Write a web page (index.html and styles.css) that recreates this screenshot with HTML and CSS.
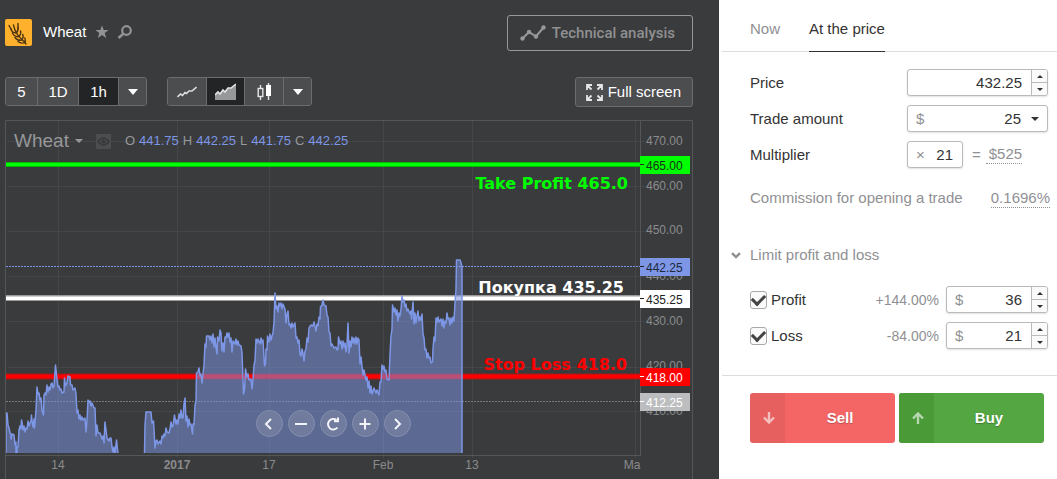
FILE: index.html
```html
<!DOCTYPE html>
<html lang="en">
<head>
<meta charset="utf-8">
<title>Wheat</title>
<meta name="viewport" content="width=device-width, initial-scale=1">
<link rel="stylesheet" href="styles.css">
</head>
<body>
<div class="app">
  <main class="market">
    <header class="market-head">
      <svg class="logo" viewBox="0 0 27 27" width="27" height="27" aria-hidden="true">
        <rect width="27" height="27" rx="2" fill="#ffb02c"/>
        <g fill="none" stroke="#4a3310" stroke-width="1.400" stroke-linecap="round">
          <path d="M8.500 6Q10 15 19.500 23L21 25M4 6.500 6.500 11M13 4.500V9"/>
          <path d="M6 10Q6.500 13.500 11 14Q13.500 12 13 8.500M7.500 14Q9 17.500 13.300 17.800Q16.500 15.500 15.500 12M10 18.500Q12 21.500 16 21.300Q19 19 17.800 15.500M13 22.500Q16 25 19.500 23.700Q21 21.500 19.800 19"/>
        </g>
      </svg>
      <h1 class="asset">Wheat</h1>
      <button class="icon-btn" aria-label="Add to favourites">
        <svg viewBox="0 0 14 14" width="14" height="14"><path d="M7 .3 8.700 5H13.600L9.700 8 11.200 12.900 7 10 2.800 12.900 4.300 8 .4 5H5.300Z" fill="#929394"/></svg>
      </button>
      <button class="icon-btn" aria-label="Search">
        <svg viewBox="0 0 16 16" width="16" height="16" fill="none" stroke="#929394"><circle cx="9.500" cy="6.500" r="4.300" stroke-width="2.200"/><path d="M6.300 9.700 1.500 14" stroke-width="2.600"/></svg>
      </button>
      <button class="analysis">
        <svg viewBox="0 0 26 16" width="26" height="16"><path d="M2.500 13.500 9 7l7 4.500L23.500 2.500" fill="none" stroke="#97989a" stroke-width="2"/><g fill="#97989a"><circle cx="2.500" cy="13.500" r="2.200"/><circle cx="9" cy="7" r="2.200"/><circle cx="16" cy="11.500" r="2.200"/><circle cx="23.500" cy="2.500" r="2.200"/></g></svg>
        Technical analysis
      </button>
    </header>

    <div class="toolbar">
      <div class="group">
        <button class="seg w31">5</button>
        <button class="seg w41">1D</button>
        <button class="seg w40 active">1h</button>
        <button class="seg w28" aria-label="More intervals"><svg viewBox="0 0 10 6" width="10" height="6"><path d="M0 0H10L5 6Z" fill="#fff"/></svg></button>
      </div>
      <div class="group">
        <button class="seg w38" aria-label="Line"><svg viewBox="0 0 20 12" width="20" height="12"><path d="M.5 11 3.500 8 5.500 9.500 8 6.500 9.500 7.500 12 5H15L19.500 1" fill="none" stroke="#dcdcdd" stroke-width="1.600"/></svg></button>
        <button class="seg w38 active" aria-label="Area"><svg viewBox="0 0 21 17" width="21" height="17"><path d="M0 12 3 9 5 11 8 7 10 9 13 5H16L21 1V17H0Z" fill="#97989a"/><path d="M0 12 3 9 5 11 8 7 10 9 13 5H16L21 1" fill="none" stroke="#e4e4e5" stroke-width="1.600"/></svg></button>
        <button class="seg w39" aria-label="Candles"><svg viewBox="0 0 15 18" width="15" height="18"><path d="M3.500 2V5M3.500 13V17M11.500 0V17" stroke="#e6e6e7" stroke-width="1.400"/><rect x="1.200" y="5.500" width="4.600" height="8" fill="none" stroke="#e6e6e7" stroke-width="1.400"/><rect x="9" y="2" width="5" height="11" fill="#fff"/></svg></button>
        <button class="seg w28" aria-label="More chart types"><svg viewBox="0 0 10 6" width="10" height="6"><path d="M0 0H10L5 6Z" fill="#fff"/></svg></button>
      </div>
      <button class="fullscreen">
        <svg viewBox="0 0 17 17" width="17" height="17" fill="none" stroke="#e6e6e7" stroke-width="1.800"><path d="M1 6V1H6M11 1H16V6M16 11V16H11M6 16H1V11M1 1 5.500 5.500M16 1 11.500 5.500M16 16 11.500 11.500M1 16 5.500 11.500"/></svg>
        Full screen
      </button>
    </div>

    <section class="chart" aria-label="Price chart">
      <svg class="plot" viewBox="5 120 688 359">
        <clipPath id="plot-area"><rect x="6" y="121" width="634" height="332"/></clipPath>
        <path d="M5.500 479V120.500H692.500V479" fill="none" stroke="#555658"/>
        <path class="grid" d="M58.500 121V458M177.500 121V458M269.500 121V458M383.500 121V458M472.500 121V458M635.500 121V458M7 141.500H645M7 186.500H645M7 231.500H645M7 276.500H645M7 321.500H645M7 367.500H645M7 411.500H645"/>
        <path d="M5 455.500H640.500M640.500 121V456" fill="none" stroke="#555658"/>
        <path d="M6 162V167H640V162Z" fill="#00b800"/><path d="M6 163H640V166H6Z" fill="#0f0"/>
        <path d="M6 295H640V301H6Z" fill="#9a9a9b"/><path d="M6 296.500H640V300H6Z" fill="#fff"/>
        <path d="M6 373.500H640V379.500H6Z" fill="#a01c1d"/><path d="M6 374.500H640V378.500H6Z" fill="#f00"/>
        <path d="M6 266.500H640" stroke="#7d97e6" stroke-dasharray="2 1"/>
        <path d="M6 401.500H640" stroke="#77787a" stroke-dasharray="2 1"/>
        <g class="area" clip-path="url(#plot-area)">
          <path d="M6 454V413L7 413 8 425 9 428 10 433 11 434 11 439 12 434 14 435 15 445 16 442 16 454H17L17 447 18 447 19 430 20 426 21 429 21.500 420 22 422 23 430 24 426 25 432 26 428 27 429 28 421 29 426 30 423 31 421 31.500 415 32 421 33 427 34 419 34.500 428 36 410 37 387 38 394 39 393 40 400 41 398 42 410 43.500 415 44 395 45 393 46 395 47 385 48 392 49 387 50 390 51 384 52 383 53 388 54 386 55.500 365 57 379 58 387 59 386 60 390 61 389 62 393 64 392 64.500 378 65.500 386 67 383 68 376 70 377 70.500 385 72 385 73 390 75 388 76 394 77 413 78 410 79 419 80 415 81 420 82 417 83 420 85 418 86 432 87 420 88 400 89 402 90 401 91 406 92 403 94 408 95 408 96 436 97 425 98 433 100 433 102 439 103 436 104 443 105 422 106 430 107 438 109 441 110 438 111 438 112 447 113 452 114 447 115 454 116.500 440 118 454Z"/>
          <path d="M144.500 454 145 425 146 412H151L152 423 153.500 421 155 448 156 441 157 440 158 444 160 441 161 444 162 436 163 438 164 434 165 436 166 428 167 432 169 433 170 429 171 422 172 427 173 426 174.500 415 176 424 177 420 178 424 179 414 180 418 181 410 182 418 183 418 184 404 185 398 186 421 187 416 188 427 189 419 190 425 191 424 192.500 434 193 424 194 425 195 405 196 401 196.500 373 198 372 199 368 200 376 201 374 202 383 203 374 204 365 205 344 206 347 206.500 336H209L210 340 211 336 212 343 213 334 214 347 215 338 216 348 217 354 217.500 337 219 341 220 330 221 333 222 351 223 343 224 352 225 337 226 338 227 333 228 337 229 333 230 342 231 338 232 352 233 341 235 344 236 339 237 345 238 341 239 345 241 346 242 353 243.500 394 244.500 390 245.500 369 247 377 248 374 249 380 251 379 252 389 253 379 254 365 255 361 256 339 257 343 258 339 260 344 261 338 262 343 263 340 264.500 366 265.500 364 266 349 267 350 267.500 336 269 342 270 334 271 340 272 336 273 333 274 322 275 293 276 309 277 306 278 312 279 303 280 306 281 303 282 309 283 304 285 309 286 323 287 314 288 311 289 325 290 324 291 328 292 323 293 327 295 323 296 338 297 337 298 343 299 340 300 354 301 356 302 349 303 353 304 361 305 351 306 349 307 338 308 342 309 328 311 325 313 326 314 322 316 331 317 324 318 326 319 317 320 319 320.500 307 322 305 323 300 324 305 326 306 327 315 328 317 329 332 330 333 331 346 332 344 334 348 336 347 337 350 338 349 338.500 337 340 344 341 341 342 349 343 341 344 347 345 343 346 352 347 345 348 323 349 353 350 341 351 347 352 337 353 343 354 338 355 344 356 337 357 344 358 338 359 340 360 364 361 357 363 375 364 370 366 380 367 377 368 388 369 381 370 393 371 386 372 394 374 388 376 393 377 390 379 395 380 382 381 382 382 365 383 369 384 366 385 372 386 370 387 379 389 380 390 355 391 336 392 329 392.500 305 394 312 395 308 396 315 397 310 398 321 399 313 400 316 401 309 402 296 403 302 404 300 405 307 406 304 407 311 408 309 410 314 411 311 411.500 319 413 302 414 324 415 313 416 323 417 316 418 311 419 321 420 317 421 320 422 314 423 334 424 338 425 350 426 349 427 358 428 353 429 358 430 357 431 363 432.500 362 433 349 434 337 435 341 436 318 437 322 438 317 439 322 441 319 442 326 443 319 444 328 445 321 446 323 447 313 448 319 449 318 450 325 451 318 452 323 453 317 454 321 455 303 456 289 456.500 260H460L461 263 462 267V454Z"/>
        </g>
        <g class="ticks">
          <text x="646" y="145">470.00</text><text x="646" y="190">460.00</text><text x="646" y="234">450.00</text><text x="646" y="280">440.00</text><text x="646" y="325">430.00</text><text x="646" y="370">420.00</text><text x="646" y="415">410.00</text>
        </g>
        <g class="ticks dates">
          <text x="58" y="469">14</text><text x="177" y="469" class="bold">2017</text><text x="269" y="469">17</text><text x="383" y="469">Feb</text><text x="472" y="469">13</text><text x="632" y="469">Ma</text>
        </g>
        <g class="tags">
          <rect x="640" y="156" width="50" height="18" fill="#0f0"/><path d="M640 164.500h4" stroke="#222"/><text x="646" y="170" fill="#18301a">465.00</text>
          <rect x="640" y="258" width="50" height="18" fill="#7d97e6"/><path d="M640 266.500h4" stroke="#222"/><text x="646" y="272" fill="#20283c">442.25</text>
          <rect x="640" y="290" width="50" height="18" fill="#fff"/><path d="M640 298.500h4" stroke="#222"/><text x="646" y="304" fill="#222">435.25</text>
          <rect x="640" y="368" width="50" height="18" fill="#f00"/><path d="M640 376.500h4" stroke="#fff"/><text x="646" y="382" fill="#fff">418.00</text>
          <rect x="640" y="393" width="50" height="18" fill="#bcbdbe"/><path d="M640 401.500h4" stroke="#fff"/><text x="646" y="407" fill="#fff">412.25</text>
        </g>
        <g class="notes">
          <text x="628" y="189" fill="#0f0">Take Profit 465.0</text>
          <text x="624" y="293" fill="#fff">Покупка 435.25</text>
          <text x="627" y="370" fill="#f00">Stop Loss 418.0</text>
        </g>
      </svg>
      <div class="legend">
        <button class="symbol">Wheat <svg viewBox="0 0 8 4" width="8" height="4"><path d="M0 0H8L4 4Z" fill="#97989a"/></svg></button>
        <button class="eye" aria-label="Show or hide"><svg viewBox="0 0 13 9" width="13" height="9"><path d="M1 4.500Q6.500-2.500 12 4.500Q6.500 11.500 1 4.500Z" fill="none" stroke="#38393b" stroke-width="1.500"/><circle cx="6.500" cy="4.500" r="2" fill="#38393b"/></svg></button>
        <dl class="ohlc">
          <dt>O</dt><dd>441.75</dd><dt>H</dt><dd>442.25</dd><dt>L</dt><dd>441.75</dd><dt>C</dt><dd>442.25</dd>
        </dl>
      </div>
      <nav class="controls" aria-label="Chart navigation">
        <button aria-label="Back"><svg viewBox="0 0 14 14"><path d="M9 2 4 7l5 5"/></svg></button>
        <button aria-label="Zoom out"><svg viewBox="0 0 14 14"><path d="M1 7H13"/></svg></button>
        <button aria-label="Reset"><svg viewBox="0 0 14 14"><path d="M10.500 3A5.300 5.300 0 1 0 11.500 10.500M8 4.200H12V.5"/></svg></button>
        <button aria-label="Zoom in"><svg viewBox="0 0 14 14"><path d="M1.500 7H12.500M7 1.500V12.500"/></svg></button>
        <button aria-label="Forward"><svg viewBox="0 0 14 14"><path d="M5 2 10 7l-5 5"/></svg></button>
      </nav>
    </section>
  </main>

  <aside class="order">
    <nav class="tabs">
      <button class="tab">Now</button>
      <button class="tab current">At the price</button>
    </nav>
    <form class="form">
      <div class="row">
        <label for="price">Price</label>
        <div class="field wide">
          <input id="price" type="text" value="432.25">
          <span class="spin"><button type="button" class="up" aria-label="Increase price"></button><button type="button" class="down" aria-label="Decrease price"></button></span>
        </div>
      </div>
      <div class="row">
        <label for="amount">Trade amount</label>
        <div class="field wide">
          <span class="unit">$</span>
          <select id="amount"><option>25</option></select>
          <svg class="caret" viewBox="0 0 8 4" width="8" height="4"><path d="M0 0H8L4 4Z" fill="#333"/></svg>
        </div>
      </div>
      <div class="row">
        <label for="multiplier">Multiplier</label>
        <div class="product">
          <div class="field small"><span class="unit">×</span><input id="multiplier" type="text" value="21"></div>
          <span>=</span><a class="hint" href="#">$525</a>
        </div>
      </div>
      <div class="row commission">
        <span>Commission for opening a trade</span>
        <a class="hint" href="#">0.1696%</a>
      </div>
      <button type="button" class="toggle"><svg viewBox="0 0 10 7" width="10" height="7"><path d="M1 1.200 5 5 9 1.200" fill="none" stroke="#8f9093" stroke-width="2.400"/></svg>Limit profit and loss</button>
      <div class="row limit">
        <label class="check"><input type="checkbox" checked>Profit</label>
        <span class="percent">+144.00%</span>
        <div class="field medium">
          <span class="unit">$</span><input type="text" value="36" aria-label="Profit amount">
          <span class="spin"><button type="button" class="up" aria-label="Increase profit"></button><button type="button" class="down" aria-label="Decrease profit"></button></span>
        </div>
      </div>
      <div class="row limit">
        <label class="check"><input type="checkbox" checked>Loss</label>
        <span class="percent">-84.00%</span>
        <div class="field medium">
          <span class="unit">$</span><input type="text" value="21" aria-label="Loss amount">
          <span class="spin"><button type="button" class="up" aria-label="Increase loss"></button><button type="button" class="down" aria-label="Decrease loss"></button></span>
        </div>
      </div>
    </form>
    <div class="actions">
      <button class="deal sell"><span class="arrow"><svg viewBox="0 0 12 12" width="12" height="12"><path d="M6 0V10M1 5.500 6 10.500 11 5.500"/></svg></span><span class="word">Sell</span></button>
      <button class="deal buy"><span class="arrow"><svg viewBox="0 0 12 12" width="12" height="12"><path d="M6 12V2M1 6.500 6 1.500 11 6.500"/></svg></span><span class="word">Buy</span></button>
    </div>
  </aside>
</div>
</body>
</html>
```
FILE: styles.css
```css
* { box-sizing: border-box; }
body { margin: 0; font: 15px/18px "Liberation Sans", Arial, sans-serif; color: #333; background: #fff; }
button, input, select { font: inherit; color: inherit; margin: 0; padding: 0; border: 0; background: none; }
button { cursor: pointer; }
svg { display: block; flex: none; }

.app { display: grid; grid-template-columns: minmax(0, 1fr) 338px; min-height: 100vh; }

.market { background: #3a3b3d; color: #fff; padding: 15px 26px 0 5px; }
.market-head { display: flex; align-items: center; height: 36px; }
.market-head .logo, .asset, .icon-btn { margin-bottom: 2px; }
.asset { font-size: 15px; font-weight: normal; margin-left: 11px; margin-right: 9px; margin-top: 0; }
.icon-btn { margin-right: 8px; }
.analysis { display: flex; align-items: center; gap: 6px; height: 36px; margin-left: auto; padding: 0 17px 0 12px; border: 1px solid #97989a; border-radius: 3px; color: #8f9092; font: 500 15px/18px Roboto, sans-serif; }

.toolbar { display: flex; gap: 20px; margin-top: 26px; }
.group { display: flex; height: 29px; border: 1px solid #6c6d6f; border-radius: 3px; overflow: hidden; }
.seg { display: flex; align-items: center; justify-content: center; background: #4c4d4f; }
.seg + .seg { border-left: 1px solid #6c6d6f; }
.seg.active { background: #232426; }
.w28 { width: 28px; }
.w31 { width: 31px; }
.w38 { width: 38px; }
.w39 { width: 39px; }
.w40 { width: 40px; }
.w41 { width: 41px; }
.fullscreen { display: flex; align-items: center; gap: 5px; height: 30px; margin-left: auto; padding: 0 11px 0 10px; background: #4c4d4f; border: 1px solid #6c6d6f; border-radius: 3px; }

.chart { position: relative; margin-top: 13px; }
.plot { width: 100%; height: auto; }
.grid { fill: none; stroke: #454648; }
.area path { fill: #7a93e1; fill-opacity: .53; stroke: #7d97e6; stroke-width: 1.500; stroke-linejoin: round; }
.ticks { font-size: 12px; fill: #8a8b8d; }
.dates { text-anchor: middle; }
.bold { font-weight: bold; }
.tags { font-size: 12px; }
.notes { font: bold 16px "DejaVu Sans", sans-serif; text-anchor: end; }

.legend { position: absolute; top: 10px; left: 9px; display: flex; align-items: center; }
.symbol { display: flex; align-items: center; gap: 6px; font-size: 19px; line-height: 22px; color: #97989a; }
.eye { display: flex; align-items: center; justify-content: center; width: 15px; height: 15px; margin: 0 14px 0 13px; background: #4c4d4f; }
.ohlc { display: flex; margin: 0; font-size: 13px; }
.ohlc dt { margin-right: 4px; color: #97989a; }
.ohlc dd { margin: 0 4px 0 0; color: #7d97e6; }
.controls { position: absolute; left: 0; right: 32px; bottom: 42px; display: flex; justify-content: center; gap: 5px; }
.controls button { display: flex; align-items: center; justify-content: center; width: 27px; height: 27px; border: 1px solid #8490b0; border-radius: 50%; background: #707b9d; }
.controls svg { width: 14px; height: 14px; fill: none; stroke: #f2f3f7; stroke-width: 2; }

.order { padding-left: 3px; }
.tabs { display: flex; gap: 29px; height: 52px; padding-left: 28px; border-bottom: 1px solid #dcdddf; }
.tab { height: 52px; padding-top: 6px; color: #8f9093; }
.tab.current { color: #333; border-bottom: 1px solid #333; padding-top: 7px; }
.form { padding: 17px 9px 17px 28px; border-bottom: 1px solid #dcdddf; }
.row { display: flex; align-items: center; justify-content: space-between; height: 27px; margin-bottom: 9px; }
.field { display: flex; align-items: center; height: 27px; border: 1px solid #b9babd; border-radius: 3px; box-shadow: 0 1px 2px rgba(0, 0, 0, .12); background: #fff; overflow: hidden; }
.field input, .field select { flex: 1; width: 0; min-width: 0; height: 25px; text-align: right; outline: 0; }
.field select { appearance: none; text-align-last: right; }
.wide { width: 141px; }
.medium { width: 102px; }
.small { width: 56px; padding-right: 9px; }
.unit { padding-left: 8px; color: #8f9093; }
.caret { margin: 0 8px 0 10px; }
.spin { display: flex; flex-direction: column; width: 16px; height: 25px; margin-left: 9px; border-left: 1px solid #b9babd; }
.spin button { display: flex; align-items: center; justify-content: center; flex: 1; background: #fafafa; }
.spin button + button { border-top: 1px solid #b9babd; }
.spin button::before { content: ""; border: 3px solid transparent; }
.spin .up::before { border-top: 0; border-bottom-color: #333; }
.spin .down::before { border-bottom: 0; border-top-color: #333; }
.product { display: flex; align-items: center; gap: 9px; width: 141px; color: #8f9093; }
.product input { color: #333; }
.hint { color: #8f9093; text-decoration: none; border-bottom: 1px dotted #8f9093; }
.product .hint { margin-left: -4px; padding-left: 3px; }
.commission { height: 20px; margin: 20px -2px 38px 0; color: #8f9093; }
.toggle { display: flex; align-items: center; gap: 9px; margin: 0 0 22px -19px; color: #8f9093; }
.check { display: flex; align-items: center; gap: 4px; flex: 1; }
.check input { appearance: none; display: flex; align-items: center; justify-content: center; width: 17px; height: 18px; border: 1px solid #a8a9ac; border-radius: 3px; background: #fafafa; }
.check input:checked::after { content: ""; flex: none; width: 10px; height: 6px; border: solid #444; border-width: 0 0 3px 3px; transform: translateY(-1px) rotate(-45deg); }
.percent { margin-right: 7px; color: #8f9093; font-size: 14px; }
.actions { display: grid; grid-template-columns: 1fr 1fr; gap: 4px; padding: 17px 13px 20px 28px; }
.deal { display: flex; height: 50px; border-radius: 3px; overflow: hidden; color: #fff; font-weight: bold; text-shadow: 0 1px 1px rgba(0, 0, 0, .25); }
.arrow { display: flex; align-items: center; justify-content: center; width: 35px; height: 50px; padding-left: 3px; background: rgba(0, 0, 0, .06); }
.arrow svg { fill: none; stroke: #fff; stroke-opacity: .6; stroke-width: 2.400; }
.word { flex: 1; align-self: center; }
.sell { background: #f46665; }
.buy { background: #53a642; }
.buy .arrow { background: #4a9b38; }
```
